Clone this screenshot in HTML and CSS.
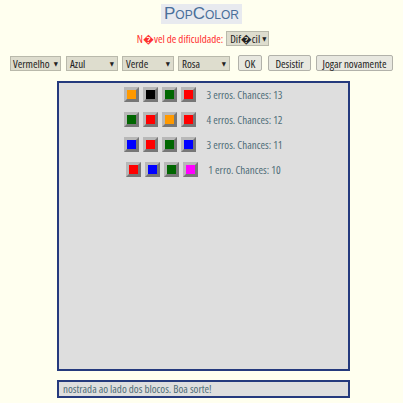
FILE: index.html
```html
<!DOCTYPE html>
<html>
<head>
<meta charset="utf-8">
<link rel="stylesheet" href="styles.css">
</head>
<body>
<div class="header">
  <h1 class="title">PopColor</h1>
</div>
<div class="level">
  <span class="level-label">N�vel de dificuldade:</span>
  <span class="sel sel-level">Dif�cil <span class="arrow">▼</span></span>
</div>
<div class="controls">
  <span class="sel sel-a">Vermelho <span class="arrow">▼</span></span>
  <span class="sel sel-b">Azul <span class="arrow">▼</span></span>
  <span class="sel sel-b">Verde <span class="arrow">▼</span></span>
  <span class="sel sel-b">Rosa <span class="arrow">▼</span></span>
  <span class="btn btn-ok">OK</span>
  <span class="btn btn-quit">Desistir</span>
  <span class="btn btn-again">Jogar novamente</span>
</div>
<div class="board">
  <div class="row">
    <span class="blk"><i class="c-orange"></i></span>
    <span class="blk"><i class="c-black"></i></span>
    <span class="blk"><i class="c-green"></i></span>
    <span class="blk"><i class="c-red"></i></span>
    <span class="info">3 erros. Chances: 13</span>
  </div>
  <div class="row">
    <span class="blk"><i class="c-green"></i></span>
    <span class="blk"><i class="c-red"></i></span>
    <span class="blk"><i class="c-orange"></i></span>
    <span class="blk"><i class="c-red"></i></span>
    <span class="info">4 erros. Chances: 12</span>
  </div>
  <div class="row">
    <span class="blk"><i class="c-blue"></i></span>
    <span class="blk"><i class="c-red"></i></span>
    <span class="blk"><i class="c-green"></i></span>
    <span class="blk"><i class="c-blue"></i></span>
    <span class="info">3 erros. Chances: 11</span>
  </div>
  <div class="row">
    <span class="blk"><i class="c-red"></i></span>
    <span class="blk"><i class="c-blue"></i></span>
    <span class="blk"><i class="c-green"></i></span>
    <span class="blk"><i class="c-pink"></i></span>
    <span class="info">1 erro. Chances: 10</span>
  </div>
</div>
<div class="ticker">nostrada ao lado dos blocos. Boa sorte!</div>
</body>
</html>
```
FILE: styles.css
```css
html, body {
  margin: 0;
  padding: 0;
  background: #ffffef;
  font-family: "Open Sans", "Liberation Sans", Arial, sans-serif;
  font-stretch: 80%;
}
.header {
  text-align: center;
  padding-top: 2px;
}
.title {
  display: inline-block;
  margin: 0;
  padding: 0 3px;
  background: #e8eaef;
  color: #4a6f9a;
  font-family: "Liberation Sans", Arial, sans-serif;
  font-stretch: normal;
  font-weight: normal;
  font-size: 17px;
  line-height: 20px;
  font-variant: small-caps;
  height: 20px;
}
.level {
  margin-top: 7px;
  font-size: 11px;
  color: #ff3030;
  display: flex;
  justify-content: center;
  align-items: center;
  gap: 3px;
  margin-left: 3px;
}
.sel {
  display: inline-flex;
  align-items: center;
  justify-content: space-between;
  box-sizing: border-box;
  height: 15px;
  padding: 0 3px;
  background: #deddce;
  border: 1px solid #b9b9ab;
  color: #222;
  font-size: 11px;
  line-height: 13px;
  white-space: nowrap;
}
.arrow {
  font-family: "DejaVu Sans", sans-serif;
  font-size: 6px;
  margin-left: 2px;
}
.sel-level { width: 43px; }
.controls {
  margin-top: 9px;
  padding-left: 10px;
  display: flex;
  align-items: center;
  gap: 4px;
}
.sel-a { width: 51px; padding: 0 2px; margin-right: 1px; }
.sel-b { width: 52px; }
.btn {
  display: inline-flex;
  align-items: center;
  justify-content: center;
  box-sizing: border-box;
  height: 16px;
  background: #e8e8e0;
  border: 1px solid #b2b2aa;
  border-radius: 2px;
  color: #222;
  font-size: 11px;
  white-space: nowrap;
}
.btn-ok { width: 24px; margin-left: 4px; margin-right: 2px; }
.btn-quit { width: 43px; margin-right: 1px; }
.btn-again { width: 77px; }
.board {
  box-sizing: border-box;
  margin: 10px 0 0 57px;
  width: 293px;
  height: 290px;
  background: #dedede;
  border: 2px solid #253a7d;
  padding-top: 0;
}
.row {
  display: flex;
  justify-content: center;
  align-items: center;
  height: 25px;
  gap: 4px;
  margin-top: -1px;
  margin-bottom: 1px;
}
.blk {
  display: inline-block;
  box-sizing: border-box;
  width: 15px;
  height: 15px;
  border: 3px solid;
  border-color: #b8b8b8 #777 #777 #b8b8b8;
  background: #999;
}
.blk i {
  display: block;
  width: 9px;
  height: 9px;
}
.info {
  margin-left: 6px;
  font-size: 11px;
  color: #4e6d78;
}
.c-orange { background: #ff9900; }
.c-black { background: #000; }
.c-green { background: #006600; }
.c-red { background: #ff0000; }
.c-blue { background: #0000ff; }
.c-pink { background: #ff00ff; }
.ticker {
  box-sizing: border-box;
  margin: 9px 0 0 57px;
  width: 293px;
  height: 18px;
  background: #dedede;
  border: 2px solid #253a7d;
  padding-left: 4px;
  font-size: 11px;
  line-height: 14px;
  color: #4e6d78;
  white-space: nowrap;
  overflow: hidden;
}
```
